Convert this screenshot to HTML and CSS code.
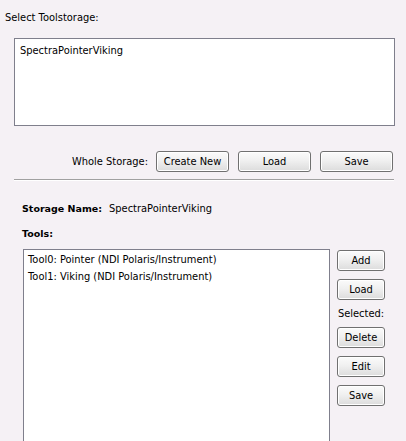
FILE: index.html
```html
<!DOCTYPE html>
<html>
<head>
<meta charset="utf-8">
<link rel="stylesheet" href="styles.css">
</head>
<body>
<div class="page">
  <div class="label top-label">Select Toolstorage:</div>
  <div class="listbox storage-list">
    <div class="item">SpectraPointerViking</div>
  </div>
  <div class="whole-row">
    <span class="label">Whole Storage:</span>
    <button class="btn wide">Create New</button>
    <button class="btn wide">Load</button>
    <button class="btn wide">Save</button>
  </div>
  <div class="separator"></div>
  <div class="name-row">
    <span class="bold">Storage Name:</span>
    <span class="label">SpectraPointerViking</span>
  </div>
  <div class="bold tools-label">Tools:</div>
  <div class="tools-row">
    <div class="listbox tools-list">
      <div class="item">Tool0: Pointer (NDI Polaris/Instrument)</div>
      <div class="item">Tool1: Viking (NDI Polaris/Instrument)</div>
    </div>
    <div class="side">
      <button class="btn small">Add</button>
      <button class="btn small">Load</button>
      <div class="label selected">Selected:</div>
      <button class="btn small">Delete</button>
      <button class="btn small">Edit</button>
      <button class="btn small">Save</button>
    </div>
  </div>
</div>
</body>
</html>
```
FILE: styles.css
```css
html, body {
  margin: 0;
  padding: 0;
  background: #f5f1f5;
  overflow: hidden;
}
body {
  font-family: "DejaVu Sans", Verdana, sans-serif;
  font-size: 9.9px;
  color: #000;
}
.page {
  width: 406px;
  height: 441px;
  overflow: hidden;
}
.label {
  line-height: 13px;
}
.top-label {
  padding: 11px 0 0 5px;
}
.listbox {
  background: #fff;
  border: 1px solid #7f7f8c;
  box-sizing: border-box;
}
.storage-list {
  margin: 14px 0 0 14px;
  width: 381px;
  height: 88px;
  padding: 3px 0 0 5px;
}
.item {
  line-height: 17px;
  white-space: nowrap;
}
.whole-row {
  display: flex;
  align-items: center;
  justify-content: flex-end;
  margin-top: 25px;
  padding-right: 13px;
  gap: 9px;
}
.whole-row .label {
  margin-right: -1px;
}
.btn {
  font-family: inherit;
  font-size: 9.9px;
  color: #000;
  border: 1px solid #707070;
  border-radius: 3px;
  background: linear-gradient(#fbfbfb 0%, #f0f0f0 45%, #dcdcdc 100%);
  box-shadow: inset 0 0 0 1px #fff;
  padding: 0;
  margin: 0;
  height: 21px;
  box-sizing: border-box;
  display: block;
}
.wide {
  width: 73px;
}
.separator {
  margin: 7px 12px 0 14px;
  height: 1px;
  background: #a0a0a0;
  border-bottom: 1px solid #fff;
}
.bold {
  font-weight: bold;
  font-size: 9.5px;
  line-height: 13px;
}
.name-row {
  display: flex;
  align-items: baseline;
  gap: 7px;
  padding: 21px 0 0 22px;
}
.tools-label {
  padding: 12px 0 0 22px;
}
.tools-row {
  display: flex;
  align-items: flex-start;
  padding: 9px 0 0 23px;
  gap: 7px;
}
.tools-list {
  width: 307px;
  height: 260px;
  padding: 1px 0 0 4px;
}
.side {
  display: flex;
  flex-direction: column;
  align-items: center;
  padding-top: 1px;
  gap: 8px;
}
.small {
  width: 48px;
}
.selected {
  margin: -1px 0 -1px;
}
```
